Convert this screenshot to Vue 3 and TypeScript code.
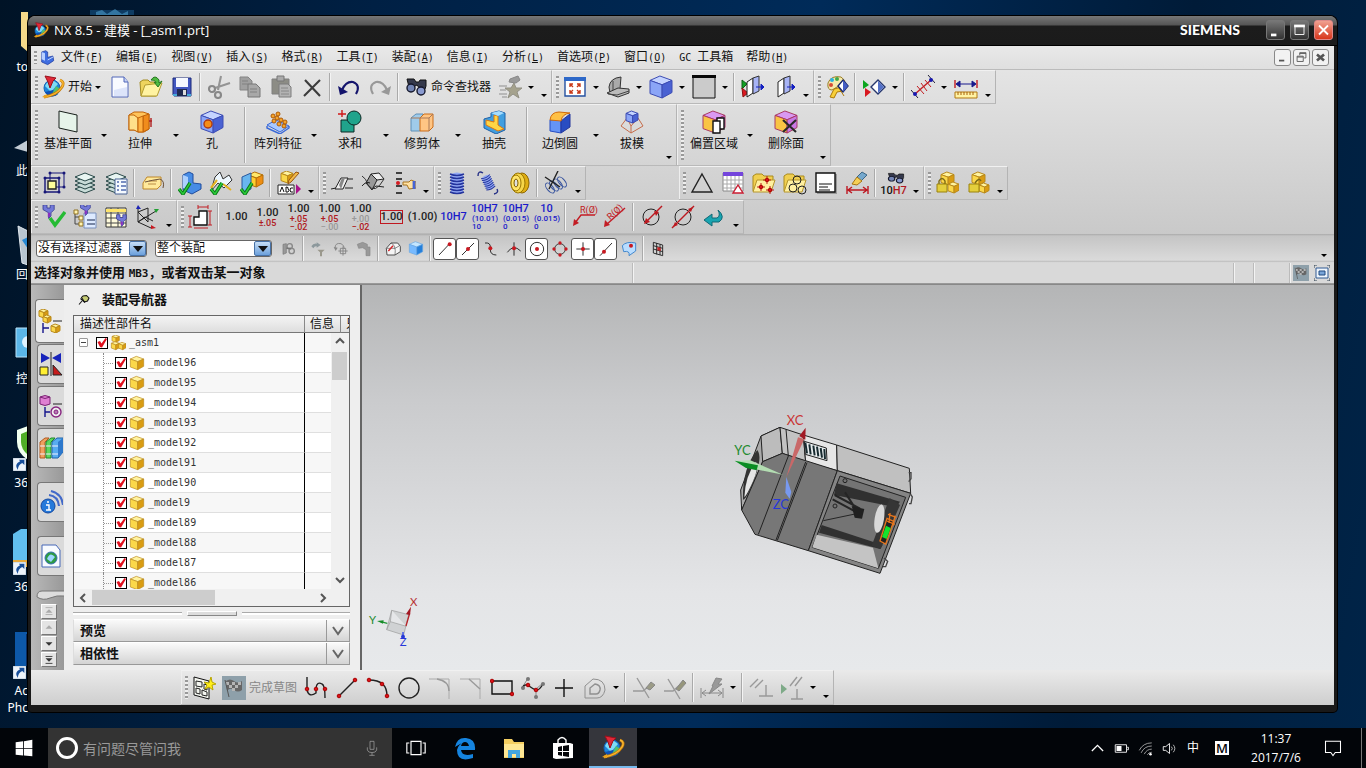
<script setup lang="ts">
import { ref } from 'vue'

type Kind = 'tool' | 'drop' | 'more' | 'sep' | 'dim'
interface Item { kind: Kind; icon: string; label: string; lines: string[][] }
interface Group { items: Item[]; large: boolean; apart: boolean }

// stroke weights above one are drawn a little lighter so small glyphs stay open
const weight = (w: number) => (w > 1 ? w * 0.7 : w)
const p = (d: string, f = 'none', s = 'none', w = 1) =>
  `<path d="${d}" fill="${f}" stroke="${s}" stroke-width="${weight(w)}"/>`
const c = (x: number, y: number, r: number, f = 'none', s = 'none', w = 1) =>
  `<circle cx="${x}" cy="${y}" r="${r}" fill="${f}" stroke="${s}" stroke-width="${weight(w)}"/>`
const cube = (x: number, y: number, s: number, t: string, l: string, r: string, e: string) => {
  const a = y + s * 0.2, b = y + s * 0.4, m = x + s * 0.55
  return p(`M${x} ${a}L${x + s * 0.45} ${y}L${x + s} ${a}L${m} ${b}Z`, t, e) +
    p(`M${x} ${a}L${m} ${b}V${y + s}L${x} ${y + s * 0.8}Z`, l, e) +
    p(`M${m} ${b}L${x + s} ${a}V${y + s * 0.75}L${m} ${y + s}Z`, r, e)
}
const gold = (x: number, y: number, s: number) => cube(x, y, s, '#fff3a0', '#fbd84a', '#d99c12', '#b98a1c')
const blue = (x: number, y: number, s: number) => cube(x, y, s, '#c5d4ff', '#8ba5f7', '#4a62d2', '#3c4cb4')
const tick = (x: number, y: number) => p(`M${x} ${y + 4}l4 5l7 -11`, 'none', '#0b7a1a', 5) + p(`M${x} ${y + 4}l4 5l7 -11`, 'none', '#2dcc3a', 2)
const folder = p('M1 5l3 -2h6l2 2h9v3l-3 12h-17z', '#f0cf50', '#a98a1c') + p('M5 9h18l-4 12h-18z', '#fff0a0', '#b5952a')
const scope = p('M3 4h7l2 3h3l1 -2h6v6l-1 3h-5l-3 -4l-4 2h-4z', '#35394c', '#111') + c(7, 13, 4, '#7385b5', '#15182c', 2) + c(17, 16, 4, '#8a9bd0', '#15182c', 2)
const logo = c(11, 13, 8, '#1c86dc', '#1464b4') + p('M4 11a8 8 0 0 1 9 -5l4 3l-7 8z', '#7fdcf4') + p('M4 17a8 8 0 0 0 13 2l-5 -4z', '#0d50b4') + p('M11 19l4 -8l3 2q1 5 -4 7z', '#52c070') +
  p('M19 5q5 2 2 7q-5 8 -18 10', 'none', '#c67a08', 4) + p('M19 5q5 2 2 7q-5 8 -18 10', 'none', '#f8b832', 2) + p('M1 22l5 -3v4z', '#e9a21c') + p('M4 1l11 2l-3 3l-3 7l-2 -6z', '#e02838', '#9a101c')
const pipe = p('M10 3l8 -1l5 6l-7 1z', '#eee', '#222') + p('M10 3l-5 9l6 7l5 -10z', '#999', '#222') + p('M1 15q4 -5 8 -3M11 18l4 -3l8 1', 'none', '#222')
const layers = [18, 14, 10].map(y => p(`M2 ${y}l10 -4l10 4l-10 4z`, '#c8dcd8', '#284848')).join('') + p('M2 6l10 -4l10 4l-10 4z', '#e8f5f2', '#284848')
const funnel = p('M5 1h5v4h4v-4h5v6l-4 4v4l-3 3v-7l-7 -4z', '#7379d8', '#34388e') + p('M11 11h3v5h-3z', '#8a30c0')
const spring = p('M6 3q6 -3 12 0v18q-6 3 -12 0z', '#92a8f4') + [3, 6, 9, 12, 15, 18, 21].map(y => p(`M5 ${y}q7 3 14 0`, 'none', '#24349c', 2)).join('')
const section = p('M6 7l6 -4v15l-6 4z', '#fff', '#222') + p('M12 3l6 -2v15l-6 3z', '#a8b4f5', '#333') + p('M15 12h5M20 9l3 3l-3 3z', '#1420c0', '#1420c0')
const grayFlag = `<rect width="24" height="24" fill="#8ea0aa"/>` + p('M4 5q4 -3 8 0t8 0v9q-4 3 -8 0t-7 1z', '#666') + p('M4 6h3v3h-3zM10 6h3v3h-3zM16 6h3v3h-3zM7 9h3v3h-3zM13 9h3v3h-3zM10 12h3v3h-3z', '#b5b5b5') + p('M3 4l4 17', 'none', '#555')
const dot = (x: number, y: number) => c(x, y, 1.8, '#d81018', '#a00')
const padlock = p('M4 13v-3q3 -5 6 0v3', 'none', '#7a6a18', 2) + p('M2 13h10v8h-10z', '#e4cf3c', '#9a820c')

const icons: Record<string, string> = {
  logo,
  part: p('M4 3l6 -2l3 2v8l8 -2l1 7l-9 6l-9 -4z', '#3f6ee0', '#1a3496') + p('M4 3l5 2v11l-5 -2z', '#b8d0ff') + p('M13 15l9 -5', 'none', '#c8dcff', 2),
  new: p('M4 2h12l4 5v15h-16z', '#f8faff', '#5166b8') + p('M16 2v5h4', '#c5d2f5', '#5166b8') + p('M6 15l13 -3v9h-13z', '#dce4fa'),
  open: p('M1 7l3 -2h5l2 2h8v4l-2 10h-15z', '#eed45e', '#a28b22') + p('M6 10l17 -2l-5 13h-16z', '#fff3a2', '#b39c30') + p('M12 5q4 -6 8 0v3l3 -2l-4 6l-4 -5l2 1q0 -3 -5 -3', '#4fbb42', '#277820'),
  save: p('M3 3h18v18h-17l-1 -1z', '#4257c0', '#1a2878') + p('M6 3h12v9h-12z', '#f5f8ff') + p('M7 14h10v7h-10z', '#202a50') + p('M13 15h3v5h-3z', '#ddd') + p('M3 19h4v2h-4zM17 19h4v2h-4z', '#45a9d8'),
  cut: p('M14 1l-3 14M23 8l-15 5', 'none', '#949494', 3) + c(5, 14, 3, 'none', '#888', 3) + c(11, 20, 3, 'none', '#888', 3),
  copy: p('M2 2h8l4 4v9h-12z', '#a0a0a0', '#858585') + p('M10 9h8l4 4v9h-12z', '#a8a8a8', '#777') + p('M4 6h6M4 9h6M12 14h7M12 17h7', 'none', '#808080'),
  paste: p('M3 4h17v15h-17z', '#8c8c85', '#808080') + p('M8 1h7v5h-7z', '#aaa', '#777') + p('M10 9h9l3 3v10h-12z', '#b3b3b3', '#7c7c7c') + p('M12 13h7M12 16h8M12 19h8', 'none', '#888'),
  del: p('M5 5l15 16M20 5l-16 16', 'none', '#3c3c3c', 3),
  undo: p('M5 15q4 -9 11 -8q8 3 3 12', 'none', '#14146c', 3) + p('M1 11l2 9l8 -3z', '#14146c'),
  redo: p('M19 15q-4 -9 -11 -8q-8 3 -3 12', 'none', '#989898', 3) + p('M23 11l-2 9l-8 -3z', '#989898'),
  find: scope,
  star: p('M16 8l2 5h6l-5 4l2 6l-6 -4l-5 4l2 -6l-5 -4h6z', '#a5a28d', '#929084') + p('M12 4l8 -3l2 4l-4 3l-7 -1z', '#999', '#888') + p('M1 11h8M2 15h6M1 19h8M4 22h5', 'none', '#aaa', 2),
  fit: p('M2 3h20v18h-20z', '#fff', '#2450a0', 2) + p('M1 2h22v4h-22z', '#2d68c8') + p('M7 12v-3h3M17 12v-3h-3M7 15v3h3M17 15v3h-3M7 9l3 3M17 9l-3 3M7 18l3 -3M17 18l-3 -3', 'none', '#c83818', 2),
  hide: p('M3 12q1 -9 12 -10l-1 12l-10 4z', '#aaa', '#333') + p('M1 18l11 -5l11 1v4l-11 4z', '#bbb', '#333') + p('M7 6v9M2 19l9 1l12 -4', 'none', '#444'),
  shade: blue(1, 1, 22),
  swatch: p('M1 1h22v22h-22z', '#cbcbcb', '#111') + p('M0 0h24v3h-24z', '#080808'),
  clip1: p('M1 5l5 4l-5 5z', '#12a025', '#126018') + p('M1 13l6 5l-5 4z', '#dc1720', '#811') + section,
  clip2: section,
  role: p('M3 8q3 -8 13 -6q5 3 4 7l-8 3l-5 3q-5 0 -4 -7z', '#f5eaaa', '#9a7d28') + c(7, 5, 2, '#29b1e0') + c(12, 4, 2, '#41a848') + c(6, 10, 2, '#d54c36') + p('M9 14l8 -2l1 4l-6 1l-3 6l-4 -1zM14 13l5 8', '#f7d03b', '#ad7a08') + p('M18 5l5 6l-5 6l-5 -6z', '#fff', '#15256a', 2) + p('M18 5l5 6l-5 6z', '#445dc3'),
  flag: p('M1 5l6 5l-6 4z', '#0da51f') + p('M3 13l6 4l-6 5z', '#d81820') + p('M16 5l7 7l-7 7l-7 -7z', '#fff', '#26366d', 2) + p('M16 6l6 6l-6 6z', '#5270c8'),
  measure: p('M4 19l16 -14', 'none', '#c21d22', 2) + p('M6 11l7 8M10 8l6 8M14 5l6 7', 'none', '#c21d22') + p('M0 15l7 8M17 0l7 8', 'none', '#24233a') + c(4, 19, 2, '#1818b0') + c(20, 5, 2, '#1818b0'),
  ruler: p('M1 5v8M23 5v8', 'none', '#c11d24', 2) + p('M3 9h18M6 6l-4 3l4 3zM18 6l4 3l-4 3z', '#19198c', '#19198c') + p('M1 17h22v6h-22z', '#fff3a5', '#b27910') + p('M4 17v3M7 17v3M10 17v3M13 17v3M16 17v3M19 17v3', 'none', '#a65e08'),
  plane: p('M3 1l18 4v17l-18 -4z', '#e6f4ea', '#161e1a'),
  extrude: p('M1 5l5 -3h9l6 2v15l-5 3h-6l-3 -2h-6z', '#ffc45a', '#c06208') + p('M1 5h5l4 3v14l-4 -2h-5z', '#ffe08a', '#c06208') + p('M15 6l6 -2v15l-6 3z', '#f08c1c', '#c06208') + p('M10 8l5 -2v16h-5z', '#ffb040', '#c06208') + p('M23 8v9M21 11h4', 'none', '#b02020', 2),
  hole: blue(1, 1, 22) + c(8, 14, 4, '#f48d18', '#b03a10', 2),
  pattern: p('M1 15l9 -5l13 6l-9 6z', '#a8c8ff', '#3868d8') + p('M1 16v2l13 6l9 -6v-2', 'none', '#3868d8', 2) + [[8, 11], [13, 14], [18, 16], [11, 8], [15, 10], [19, 12], [7, 6], [12, 4]].map(q => c(q[0], q[1], 2, '#f6a328', '#ac5908')).join(''),
  unite: p('M3 10h13v12h-13z', '#20a48c', '#0d2824') + c(16, 8, 7, '#20a48c', '#0d2824') + p('M4 0v7M0 4h8', 'none', '#d01818', 2),
  trim: p('M1 8l5 -4h7v13l-3 4h-9z', '#9fcbea', '#5f90b8') + p('M10 8l4 -4h9v13l-4 4h-9z', '#ffc584', '#ca6c18') + p('M1 8h18v13M19 8l4 -4', 'none', '#a87858'),
  shell: p('M2 9l7 -2v-4l8 -2l6 2v17l-9 4l-12 -6z', '#419fe0', '#2162a8') + p('M4 10l8 2v-7l4 1v9l6 4l-6 2l-12 -6z', '#ffd645', '#dd7710') + p('M9 3l8 -2l5 2l-6 3z', '#a5ddff'),
  blend: p('M2 10v11l11 2v-13z', '#6594f5', '#254dc3') + p('M13 11l9 -7v13l-9 6z', '#294dc2', '#25379b') + p('M2 10q1 -8 9 -8l11 1q-8 1 -9 8z', '#ffc045', '#d16a0b'),
  draft: p('M1 16l6 -8h11l5 8l-12 7z', 'none', '#c56c4a') + p('M7 8l4 8v7M18 8l-7 8', 'none', '#c56c4a') + blue(6, 1, 12),
  offset: cube(1, 1, 22, '#d999f2', '#f9c444', '#c878e4', '#a83a64') + p('M11 11h4v-3h7v11h-4v4h-7zM15 11h3v8', '#fff', '#111', 2),
  delface: cube(1, 1, 22, '#d999f2', '#f9c444', '#c878e4', '#a83a64') + p('M9 10l13 12M22 10l-13 12', 'none', '#292929', 3),
  wcs: p('M3 7h14v14h-14z', 'none', '#171778', 2) + p('M8 2h14v14h-14z', 'none', '#171778') + p('M6 10h8v8h-8z', '#ffff9a', '#222', 2) + [[3, 7], [17, 7], [3, 21], [17, 21], [8, 2], [22, 2], [22, 16]].map(q => c(q[0], q[1], 1.5, '#171778')).join(''),
  layers,
  layerlist: layers + p('M11 8h12v15h-12z', '#f5faff', '#496294') + p('M13 11h2M13 15h2M13 19h2M17 11h5M17 15h5M17 19h5', 'none', '#506bb0', 2),
  tag: p('M2 12l4 -6h14v8l-4 4h-14z', '#ffe99b', '#bd862b') + p('M8 10h8M7 13h8', 'none', '#ba8b45') + p('M4 11q8 -2 15 -3q5 2 3 9', 'none', '#6a503a'),
  okpart: p('M5 4l6 -3l4 2v9l8 1v5l-9 5l-9 -4z', '#478ce5', '#214d9d') + p('M5 4l5 2v13l-5 -2z', '#acd1ff') + tick(1, 14),
  okdraw: p('M6 6l5 -5l3 7l6 -4l3 5l-8 8l-6 -5l-7 8z', '#eef8ff', '#333') + p('M2 17l6 -8M14 13l8 6', 'none', '#e5b222', 3) + tick(2, 14),
  okbox: cube(8, 1, 15, '#ffe86b', '#ffce2f', '#ee8d12', '#b56f08') + p('M2 6l9 -4v16l-9 4z', '#69b6ee', '#2859a0') + tick(1, 14),
  abc: gold(4, 0, 12) + p('M22 2l-8 9l-3 2l1 -4l7 -8z', '#f2bb4a', '#995412') + p('M1 14h16v9h-16z', '#fff', '#222') + p('M3 21l2 -5l2 5M9 16v5h2q2 -2 0 -3q1 -2 -2 -2M16 17q-3 -1 -3 2t3 2', 'none', '#111') + p('M19 13l5 5l-5 5z', '#aa128b'),
  pipe1: p('M1 18l5 -1M15 17h8M18 8h5', 'none', '#222') + p('M5 18l6 -11h7l-5 11z', '#f2f2f2', '#222') + p('M9 14l3 -7h3l-4 11z', '#888'),
  pipe2: pipe + p('M1 5q4 2 6 9q7 10 16 -6', 'none', '#333'),
  finger: p('M4 2h6M4 8h6M4 15h6M4 22h6', 'none', '#111', 2) + c(6, 12, 2, '#d51c22') + p('M11 11h6l2 -2l5 2v6l-7 1l-2 -4h-4z', '#ffe1a0', '#a9741d') + p('M22 10v8', 'none', '#4663d5', 4),
  coil: spring,
  coil2: `<g transform="rotate(-25 12 12) translate(4 3) scale(0.7)">${spring}</g>` + p('M2 5q0 -6 5 -3M18 23q5 -1 3 -5', 'none', '#253086', 2),
  pulley: `<ellipse cx="15" cy="12" rx="7" ry="10" fill="#dfae14" stroke="#8d6600"/><ellipse cx="11" cy="12" rx="7" ry="10" fill="#f6d649" stroke="#9a7500"/><ellipse cx="9" cy="12" rx="5" ry="8" fill="#ffe468" stroke="#9a7500"/><ellipse cx="9" cy="12" rx="2" ry="4" fill="#e0e0e0" stroke="#805f00"/>`,
  coilx: [0, 4, 8, 12].map(x => `<ellipse cx="${6 + x}" cy="${17 - x * 0.5}" rx="3" ry="6" transform="rotate(-40 ${6 + x} ${17 - x * 0.5})" fill="none" stroke="#38549e"/>`).join('') + p('M1 6l15 10M14 0l-9 18', 'none', '#222', 2),
  tri: p('M12 3l10 18h-20z', 'none', '#222', 2),
  table: p('M2 2h20v18h-20z', '#fff', '#888') + p('M2 1h20v4h-20z', '#7445dc') + p('M2 9h20M2 13h20M2 17h20M6 5v15M10 5v15M14 5v15M18 5v15', 'none', '#aaa') + p('M17 14l5 8h-10z', '#fff', '#ca1d32', 2),
  foldx: folder + p('M15 5v8M11 9h8M9 12v8M5 16h8M18 15v8M14 19h8', 'none', '#be2018') + dot(15, 9) + dot(9, 16) + dot(18, 19),
  foldo: folder + c(14, 9, 4, 'none', '#222') + c(10, 17, 4, 'none', '#222') + c(19, 19, 4, 'none', '#222'),
  note: p('M3 3h20v20h-20z', '#999') + p('M2 2h19v19h-19z', '#fff', '#111', 2) + p('M5 13h13M5 16h9M5 19h11', 'none', '#111'),
  brush: p('M17 1l5 3l-6 6l-4 -4z', '#75a8cd', '#3d6685') + p('M12 6l5 4l-5 4l-5 -1z', '#f6cf55', '#a77412') + p('M2 15v8M23 15v8M3 19h19M7 16l-4 3l4 3M18 16l4 3l-4 3', 'none', '#bd1822', 2),
  fit10: `<g transform="translate(4 0) scale(0.8 0.6)">${scope}</g>`,
  cubes1: gold(6, 1, 13) + gold(13, 11, 11) + padlock,
  cubes2: gold(6, 1, 13) + gold(13, 12, 10) + p('M9 12q4 -6 6 -2', 'none', '#7a6a18', 2) + p('M3 13h10v8h-10z', '#e4cf3c', '#9a820c'),
  fok: `<g transform="translate(-3 -1) scale(0.8)">${funnel}</g>` + p('M8 13l5 7l10 -13', 'none', '#26bb34', 5),
  ftree: p('M2 6v13h7M2 12h7', 'none', '#444') + p('M1 5h4v4h-4zM6 11h4v4h-4zM6 17h4v4h-4z', '#fff3b0', '#917223') + p('M11 8h12v15h-12z', '#ddeaff', '#7890bd') + `<g transform="translate(4 -2) scale(0.7)">${funnel}</g>` + p('M14 15h8M14 19h8', 'none', '#568', 2),
  fgrid: p('M2 3h20v19h-20z', '#fffbdc', '#333') + p('M2 8h20M2 13h20M2 18h20M7 3v19M14 3v19', 'none', '#444') + p('M2 4h20v3h-20z', '#ffe56b') + `<g transform="translate(9 9) scale(0.7)">${funnel}</g>`,
  csys: p('M3 2v15l13 6M3 17l18 -11M3 17l7 -5l8 4M3 7l10 -4v14z', 'none', '#222') + p('M1 4l2 -4l3 4z', '#1d24b5') + p('M19 4l5 0l-3 4z', '#21a033') + p('M16 20l5 3l-5 1z', '#c71820'),
  dimshape: p('M6 20v-8h5v-6h8v14z', '#fff', '#111', 2) + p('M2 11v11M0 11h4M0 22h4M10 2h10M10 0v4M20 0v4M22 6v14M20 6h4M20 20h4M6 23h14', 'none', '#c11e24'),
  radius1: p('M3 18l6 -8h14', 'none', '#c31c24', 2) + p('M1 21l1 -7l5 4z', '#c31c24'),
  radius2: p('M3 20l19 -17', 'none', '#c31c24', 2) + p('M1 22l1 -7l5 5z', '#c31c24'),
  dia1: c(11, 12, 8, 'none', '#222') + p('M5 18l17 -17', 'none', '#bc1920', 2) + p('M4 19l2 -6l4 4zM14 6l5 1l-3 4z', '#bc1920'),
  dia2: c(12, 12, 8, 'none', '#222') + p('M1 23l22 -22', 'none', '#bc1920', 2) + p('M2 22l5 -2l-3 -3zM22 2l-5 2l3 3z', '#bc1920'),
  teal: p('M16 5q8 7 1 12h-7v4l-8 -6l8 -6v4h5q4 -2 1 -8', '#18a4b0', '#126875'),
  grey1: p('M3 5l5 -1v14l-5 2z', '#999', '#777') + c(13, 8, 4, 'none', '#888', 3) + c(16, 15, 4, 'none', '#888', 3) + p('M8 11h7', 'none', '#777', 3),
  grey2: p('M2 8q3 -5 8 -4v-2l6 4l-6 4v-2q-3 -1 -5 3z', '#8c989c') + p('M11 13h11l-4 4v6h-3v-6z', '#9a988c'),
  grey3: p('M3 11q0 -9 9 -7q5 2 5 8M15 8v14M8 15h14M11 11h8v8h-8z', 'none', '#858585', 2) + p('M1 9l3 6l3 -5z', '#888'),
  grey4: p('M2 5l8 -3l7 3v4h4v13h-6v-9l-5 -3l-6 1z', '#999', '#888'),
  eraser: p('M2 11l7 -8h10l4 5v8l-8 5h-12z', '#f5f5f5', '#444', 2) + p('M9 3q8 3 6 18M2 11h13l7 -4', 'none', '#555') + p('M5 15l7 -8', 'none', '#d32328', 3),
  solid: cube(2, 1, 20, '#c4e6ff', '#77baff', '#257fda', '#69a7e3'),
  sn1: p('M3 21l16 -17', 'none', '#222', 2) + c(19, 5, 3, '#c81820'),
  sn2: p('M3 21l18 -18', 'none', '#222', 2) + c(12, 12, 3, '#c81820'),
  sn3: p('M3 3q8 -1 8 6v4q0 8 9 8', 'none', '#222', 2) + c(11, 11, 3, '#c81820'),
  sn4: p('M12 2v20M2 17q9 -13 20 -2', 'none', '#222', 2) + c(12, 11, 3, '#c81820'),
  sn5: c(12, 12, 10, 'none', '#222', 2) + c(12, 12, 3, '#c81820'),
  sn6: c(12, 12, 8, 'none', '#333', 2) + [[12, 3], [21, 12], [12, 21], [3, 12]].map(q => c(q[0], q[1], 2.5, '#c81820')).join(''),
  sn7: p('M12 2v20M2 12h20', 'none', '#222', 2) + c(12, 12, 3, '#c81820'),
  sn8: p('M3 22l18 -19', 'none', '#222', 2) + c(9, 16, 3, '#c81820'),
  sn9: p('M2 7q6 -7 20 -4v12l-10 7q2 -8 -8 -6z', '#b9ddff', '#3c83cb', 2) + c(15, 7, 3, '#c81820'),
  sgrid: p('M5 2l14 4v16l-14 -4zM5 7l14 4M5 12l14 4M10 3v17M15 5v16', 'none', '#222', 2) + p('M11 9l5 1v5l-5 -1z', '#c82628'),
  sketch: p('M2 1l15 4v18l-15 -4z', '#f4f6f0', '#111') + p('M4 5l6 1v5l-6 -1zM12 8l3 1v5l-3 -1zM4 12l4 1v5l-4 -1zM10 14l5 2v4l-5 -1z', 'none', '#222') + p('M19 1l1 5l4 2l-4 1l1 5l-4 -3l-4 2l2 -4l-3 -3l5 1z', '#ffef1c', '#b8a500'),
  finish: grayFlag,
  profile: p('M3 1v13q2 8 9 3v-5q1 -7 6 -4q3 1 3 14', 'none', '#222', 2) + dot(3, 13) + dot(12, 13) + dot(21, 13),
  line: p('M4 20l16 -16', 'none', '#222', 2) + dot(4, 20) + dot(20, 4),
  arc: p('M3 4q18 0 18 16', 'none', '#222', 2) + dot(3, 4) + dot(16, 8) + dot(21, 20),
  circle: c(12, 12, 10, 'none', '#222', 2),
  fillet: p('M1 3h20v20', 'none', '#aaa') + p('M9 3q12 2 12 12', 'none', '#999', 2),
  chamfer: p('M1 3h20v20', 'none', '#aaa') + p('M10 3l11 10', 'none', '#999', 2),
  rect: p('M2 5h20v13h-20z', 'none', '#111', 2) + dot(2, 5) + dot(22, 18),
  spline: p('M1 12l6 -10M15 13l7 -6M15 13v7', 'none', '#888') + p('M1 12q3 -5 7 -2t7 4t7 -6', 'none', '#222', 2) + [[2, 12], [7, 3], [22, 8], [15, 21]].map(q => c(q[0], q[1], 2, '#777')).join('') + dot(7, 9) + dot(15, 14),
  plus: p('M12 3v18M3 12h18', 'none', '#111', 2),
  offcrv: p('M2 22v-12l8 -7q12 0 12 11q-2 8 -8 8z', 'none', '#909090') + p('M7 18v-6l5 -4q6 1 5 6q-1 4 -4 4z', 'none', '#909090', 2),
  trim1: p('M5 2l12 20M1 15h10l6 -5', 'none', '#999', 2) + p('M14 12l5 -6l4 3l-5 5z', '#9b9b86', '#888'),
  trim2: p('M5 3l12 20M1 15h9l10 -9', 'none', '#999', 2) + p('M13 13l7 -9l3 3l-7 8z', '#96967b', '#888'),
  autodim: p('M1 12v10M23 12v10M2 17h20M6 14l-4 3l4 3M18 14l4 3l-4 3', 'none', '#888') + p('M12 10l4 -8l6 1l-4 5h4l-13 10l4 -8z', '#999', '#888'),
  con1: p('M1 11l8 -8M6 12l8 -8M17 9v11M10 20h14', 'none', '#999', 2),
  con2: p('M1 8l6 5l-6 5z', '#7eaa88') + p('M10 10l7 -9M15 10l7 -9M17 13v10M11 23h12', 'none', '#999', 2),
  asm: gold(3, 0, 11) + gold(2, 10, 12) + gold(13, 11, 11),
  box: gold(2, 2, 20),
  navAsm: gold(1, 0, 9) + gold(5, 6, 8) + gold(13, 15, 9) + p('M5 14v10M5 19h6', 'none', '#15158c', 2) + p('M15 12h9', 'none', '#222'),
  constraint: p('M2 1l9 5l-9 5zM22 1l-9 5l9 5z', '#1824bb') + p('M12 0v24', 'none', '#222') + p('M1 15h8v8h-8z', '#ffef32', '#222') + p('M14 13l9 10h-9z', '#c51b1b', '#222'),
  history: p('M1 3v7q5 3 10 0v-7q-5 -3 -10 0q5 3 10 0', '#df7fd2', '#7c2475') + p('M6 13v10M6 18h5', 'none', '#15158c', 2) + p('M14 10h9', 'none', '#222') + c(17, 18, 5, '#eee', '#872480', 2) + c(17, 18, 2, '#b878b4', '#872480'),
  books: p('M1 6l5 -4h4l-4 4v16h-5z', '#f0a060', '#b05a20') + p('M7 6l5 -4h4l-4 4v16h-5z', '#5cd85c', '#23872b') + p('M13 6l5 -4h6v14l-5 6h-6z', '#58acf0', '#1e62a8') + p('M19 6l5 -4v14l-5 6z', '#2d78cc') + p('M1 10h5M7 10h5M13 10h6M1 18h5M7 18h5M13 18h6', 'none', '#eef'),
  info: c(9, 16, 7, '#2579da', '#1548a0') + p('M8 12h2M7 15h3v5M7 20h5', 'none', '#fff', 2) + p('M10 5q9 1 10 11M12 1q11 3 12 14', 'none', '#4269c9', 3),
  html: p('M3 1h14l4 5v17h-18z', '#f8fbff', '#4769b8') + c(12, 14, 6, '#2e9b44', '#356fae') + p('M8 15q3 -8 8 -2l-4 5z', '#9cd6ff'),
  pin: p('M2 21l6 -7', 'none', '#111', 3) + p('M7 7l6 9l6 -2l3 -6l-5 -5l-7 1z', '#c7cd75', '#111', 3) + p('M5 9l9 8', 'none', '#111', 3),
  win: p('M2 5l9 -1v8h-9zM12 4l10 -2v10h-10zM2 13h9v8l-9 -1zM12 13h10v9l-10 -1z', '#fff'),
  tasks: p('M6 4h12v16h-12zM4 6h-3v12h3M20 6h3v12h-3', 'none', '#fff', 2),
  edge: p('M2 11q2 -10 11 -9q10 1 9 12h-14q1 7 12 4v4q-16 5 -16 -8q1 -6 8 -8q-6 2 -10 5M8 10h8q-1 -4 -4 -4t-4 4', '#1584df'),
  files: p('M2 3h8l2 3h10v16h-20z', '#f5cf61') + p('M2 8h20v13h-20z', '#ffe894') + p('M6 22v-8h12v8h-4v-4h-4v4z', '#43a5de'),
  store: p('M2 7h17l3 1v14l-17 1l-3 -1z', '#fff') + p('M7 9v-5q4 -5 8 0v4', 'none', '#fff', 2) + p('M7 11l4 -1v5h-4zM12 10l6 -1v6h-6zM7 16h4v4l-4 -1zM12 16h6v5l-6 -1z', '#05070a'),
  mic: p('M9 2h6v12h-6zM5 11v4q1 4 7 4t7 -4v-4M12 19v4M8 23h8', 'none', '#aaa'),
  up: p('M3 16l9 -9l9 9', 'none', '#fff', 3),
  battery: p('M2 6h18v12h-18zM21 10h2v4h-2', 'none', '#fff', 2) + p('M4 8h8v8h-8z', '#fff'),
  wifi: p('M2 15q6 -12 20 -12M5 19q5 -11 17 -11M10 21q4 -8 12 -8M15 22q2 -4 7 -4', 'none', '#aaa', 2) + c(20, 21, 2, '#fff'),
  sound: p('M2 9h4l6 -5v16l-6 -5h-4z', 'none', '#fff', 2) + p('M15 9q3 3 0 6M18 6q5 6 0 12', 'none', '#ccc', 2),
  bell: p('M2 3h20v15h-7l-3 4l-3 -4h-7z', 'none', '#fff', 2),
  arrowBadge: p('M0 0h24v24h-24z', '#eef4fa', '#8da1b8') + p('M11 3h10v10l-4 -4q-8 4 -8 13q-8 -10 4 -16z', '#184f9a'),
}

const dims: string[][][] = [
  [['1.00', 'k']],
  [['1.00', 'k'], ['±.05', 'r']],
  [['1.00', 'k'], ['+.05', 'r'], ['−.02', 'r']],
  [['1.00', 'k'], ['+.05', 'r'], ['−.00', 'g']],
  [['1.00', 'k'], ['+.00', 'g'], ['−.02', 'r']],
  [['1.00', 'k boxed']],
  [['(1.00)', 'k']],
  [['10H7', 'b']],
  [['10H7', 'b'], ['(10.01)', 'b'], ['10', 'b']],
  [['10H7', 'b'], ['(0.015)', 'b'], ['0', 'b']],
  [['10', 'b'], ['(0.015)', 'b'], ['0', 'b']],
]

// "|" separator, "v" drop-down arrow, "o" overflow arrow, "#n" tolerance style, "icon:label" tool
function group(src: string, large = false, apart = false): Group {
  const items = src.split(' ').map((t): Item => {
    if (t[0] === '#') return { kind: 'dim', icon: '', label: '', lines: dims[Number(t.slice(1))] }
    const kind: Kind = t === '|' ? 'sep' : t === 'v' ? 'drop' : t === 'o' ? 'more' : 'tool'
    const [icon, label = ''] = t.split(':')
    return { kind, icon, label, lines: [] }
  })
  return { items, large, apart }
}

const rows: Group[][] = [
  [
    group('logo:开始 new open save | cut copy paste del | undo redo | find:命令查找器 star v o'),
    group('fit v hide v shade v swatch v | clip1 clip2 o'),
    group('role | flag v | measure v ruler o'),
  ],
  [
    group('plane:基准平面 v extrude:拉伸 v hole:孔 | pattern:阵列特征 v unite:求和 v trim:修剪体 v shell:抽壳 | blend:边倒圆 v draft:拔模 o', true),
    group('offset:偏置区域 v delface:删除面 o', true),
  ],
  [
    group('wcs layers layerlist | tag | okpart okdraw okbox | abc o'),
    group('pipe1 pipe2 finger o'),
    group('coil coil2 pulley | coilx o'),
    group('tri table foldx foldo note brush | fit10 o', false, true),
    group('cubes1 cubes2 o'),
  ],
  [
    group('fok ftree fgrid csys o'),
    group('dimshape | #0 #1 #2 #3 #4 #5 #6 #7 #8 #9 #10 | radius1 radius2 | dia1 dia2 teal o'),
  ],
]
const sketchRow: Group[] = [
  group('sketch finish:完成草图 profile line arc circle fillet chamfer rect spline plus offcrv v | trim1 trim2 | autodim v | con1 con2 v o'),
]

const menus: [string, string][] = [
  ['文件', 'F'], ['编辑', 'E'], ['视图', 'V'], ['插入', 'S'], ['格式', 'R'], ['工具', 'T'], ['装配', 'A'],
  ['信息', 'I'], ['分析', 'L'], ['首选项', 'P'], ['窗口', 'O'], ['GC 工具箱', ''], ['帮助', 'H'],
]
const snaps = ['sn1', 'sn2', 'sn3', 'sn4', 'sn5', 'sn6', 'sn7', 'sn8', 'sn9']
const snapOn = ref(new Set(['sn1', 'sn2', 'sn5', 'sn7', 'sn8']))
function toggle(s: string) {
  if (!snapOn.value.delete(s)) snapOn.value.add(s)
}
const models = ref(['96', '95', '94', '93', '92', '91', '90', '9', '89', '88', '87', '86'].map(n => ({ name: `_model${n}`, on: true })))
const rootOn = ref(true)
const tabs = ['navAsm', 'constraint', 'history', 'books', 'info', 'html']
const shortcuts = [
  { text: 'to', art: 'folder' }, { text: '此', art: 'pc' }, { text: '回', art: 'bin' }, { text: '控', art: 'panel' },
  { text: '36', art: 'shield' }, { text: '36', art: 'drive' }, { text: 'Ac\nPhc', art: 'ps' },
]
const art: Record<string, string> = {
  folder: p('M21 4h7v40l-7 -6z', '#f5d98a'),
  pc: p('M14 36l14 -8v12z', '#c3ccd4'),
  bin: p('M18 10l10 5v34l-6 -2z', '#b9c6d0', '#e1e8ee') + p('M22 24l6 -3v12z', '#2789d3'),
  panel: p('M16 8h12v29h-12z', '#5bb6e8', '#b9e2f8') + c(28, 22, 6, '#dff2ff'),
  shield: p('M17 6l11 -4v34q-11 -7 -11 -18z', '#f1fff0') + p('M21 10l7 -3v24q-7 -6 -7 -13z', '#4fae26'),
  drive: p('M13 6l8 -5h7v33h-15z', '#62bfee') + p('M13 32h15v7h-15z', '#e8aa3c'),
  ps: p('M15 0h13v34h-13z', '#0d58a8') + p('M26 2h2v32h-2z', '#0b2c60'),
}
</script>

<template>
  <div class="screen">
    <div class="desktop">
      <svg class="glow" viewBox="0 0 50 10"><path d="M2 4h44v6h-44z" fill="#1b5f95" opacity="0.5" /><path d="M8 6l6 -2l5 4l8 -5l7 5l6 -3v5h-32z" fill="#4d9ccc" opacity="0.6" /></svg>
      <div class="shortcuts">
        <a v-for="(s, i) in shortcuts" :key="i" href="#" class="shortcut">
          <svg viewBox="0 0 28 50" v-html="art[s.art]" />
          <svg v-if="i > 3" class="badge" viewBox="0 0 24 24" v-html="icons.arrowBadge" />
          <span>{{ s.text }}</span>
        </a>
      </div>

      <main class="window">
        <header class="title">
          <svg class="ic16" viewBox="0 0 24 24" v-html="icons.logo" />
          <span class="caption">NX 8.5 - 建模 - [_asm1.prt]</span>
          <b class="brand">SIEMENS</b>
          <button class="ctl" aria-label="最小化"><svg viewBox="0 0 18 20"><path d="M4 14h6v3h-6z" fill="#fff" /></svg></button>
          <button class="ctl" aria-label="最大化"><svg viewBox="0 0 18 20"><path d="M4 6h10v9h-10z" fill="none" stroke="#fff" /><path d="M3 4h12v3h-12z" fill="#fff" /></svg></button>
          <button class="ctl close" aria-label="关闭"><svg viewBox="0 0 18 20"><path d="M4 5l10 10M14 5l-10 10" stroke="#fff" stroke-width="2" /></svg></button>
        </header>

        <nav class="menu">
          <i class="grip" />
          <svg class="ic16" viewBox="0 0 24 24" v-html="icons.part" />
          <button v-for="m in menus" :key="m[0]" class="menuitem">
            <template v-if="m[1]">{{ m[0] }}<span class="half">(<u>{{ m[1] }}</u>)</span></template>
            <template v-else><span class="half">GC </span>工具箱</template>
          </button>
          <span class="grow" />
          <button class="mdi" aria-label="最小化"><svg viewBox="0 0 16 17"><path d="M4 11h6v2h-6z" fill="#555" /></svg></button>
          <button class="mdi" aria-label="还原"><svg viewBox="0 0 16 17"><path d="M6 6v-3h7v6h-2M3 7h7v6h-7zM3 8h7M6 4h7" fill="none" stroke="#555" stroke-width="1" /></svg></button>
          <button class="mdi" aria-label="关闭"><svg viewBox="0 0 16 17"><path d="M4 5l8 7M12 5l-8 7" stroke="#555" stroke-width="3" /></svg></button>
        </nav>

        <div class="bars">
          <div v-for="(row, ri) in rows" :key="ri" class="row">
            <div v-for="(g, gi) in row" :key="gi" class="group" :class="{ large: g.large, apart: g.apart }">
              <i class="grip" />
              <template v-for="(t, ti) in g.items" :key="ti">
                <i v-if="t.kind === 'sep'" class="sep" />
                <button v-else-if="t.kind === 'drop' || t.kind === 'more'" :class="t.kind" aria-label="更多"><i class="arrow" /></button>
                <button v-else-if="t.kind === 'dim'" class="dim"><span v-for="(l, li) in t.lines" :key="li" :class="l[1]">{{ l[0] }}</span></button>
                <button v-else class="tool" :class="{ wide: t.label && !g.large }">
                  <svg viewBox="0 0 24 24" v-html="icons[t.icon]" />
                  <span v-if="t.label">{{ t.label }}</span>
                  <i v-if="t.icon === 'logo'" class="arrow" />
                  <span v-if="t.icon === 'fit10'" class="ten">10<em>H7</em></span>
                  <span v-if="t.icon.startsWith('radius')" class="rad" :class="t.icon">R(Ø)</span>
                </button>
              </template>
            </div>
          </div>
        </div>

        <div class="selection">
          <label class="pick"><select aria-label="选择过滤器"><option>没有选择过滤器</option></select><span class="knob"><i /></span></label>
          <label class="pick second"><select aria-label="选择范围"><option>整个装配</option></select><span class="knob"><i /></span></label>
          <button class="small"><svg viewBox="0 0 24 24" v-html="icons.grey1" /></button>
          <i class="sep" />
          <button v-for="s in ['grey2', 'grey3', 'grey4']" :key="s" class="small"><svg viewBox="0 0 24 24" v-html="icons[s]" /></button>
          <i class="sep" />
          <button v-for="s in ['eraser', 'solid']" :key="s" class="small"><svg viewBox="0 0 24 24" v-html="icons[s]" /></button>
          <i class="sep" />
          <button v-for="s in snaps" :key="s" class="small" :class="{ on: snapOn.has(s) }" @click="toggle(s)"><svg viewBox="0 0 24 24" v-html="icons[s]" /></button>
          <i class="sep" />
          <button class="small"><svg viewBox="0 0 24 24" v-html="icons.sgrid" /></button>
          <span class="grow" />
          <button class="more" aria-label="更多"><i class="arrow" /></button>
        </div>

        <div class="status">
          <b class="hint">选择对象并使用 <span class="half">MB3</span>，或者双击某一对象</b>
          <span class="cell grow" /><span class="cell c20" /><span class="cell c36" />
          <span class="cell last">
            <svg class="ic16" viewBox="0 0 24 24" v-html="icons.finish" />
            <svg class="ic16" viewBox="0 0 16 16"><path d="M2 3h12v10h-12z" fill="#eef5fc" stroke="#315a93" /><path d="M5 6h6v4h-6z" fill="#79a5d8" stroke="#234b80" /><path d="M0 3v-3h3M13 0h3v3M16 13v3h-3M3 16h-3v-3" fill="none" stroke="#345" /></svg>
          </span>
        </div>

        <section class="work">
          <div class="resource">
            <button v-for="(t, i) in tabs" :key="t" class="tab" :class="{ active: i === 0, spaced: i > 3 }"><svg viewBox="0 0 24 24" v-html="icons[t]" /></button>
            <svg class="wave" viewBox="0 0 28 11"><path d="M28 1h-22q-5 0 -5 6q6 4 13 1t14 -2" fill="#ddd" stroke="#777" /></svg>
            <button v-for="n in 4" :key="n" class="step" aria-label="滚动">
              <svg viewBox="0 0 16 15"><path v-if="n < 3" d="M4 9l4 -4l4 4z" fill="#aaa" /><path v-else d="M4 6l4 4l4 -4z" fill="#333" /><path v-if="n === 1" d="M4 3h8M4 11h8" stroke="#aaa" /><path v-if="n === 4" d="M4 4h8M4 12h8" stroke="#333" /></svg>
            </button>
          </div>

          <aside class="panel">
            <h2><svg viewBox="0 0 24 24" v-html="icons.pin" />装配导航器</h2>
            <div class="tree">
              <div class="viewport">
                <table>
                  <thead><tr><th class="name">描述性部件名</th><th class="inf">信息</th><th class="ro">只</th></tr></thead>
                  <tbody>
                    <tr>
                      <td><div class="node"><span class="expander" /><label><input v-model="rootOn" type="checkbox"><svg class="ic16" viewBox="0 0 24 24" v-html="icons.asm" /><span>_asm1</span></label></div></td><td /><td />
                    </tr>
                    <tr v-for="m in models" :key="m.name">
                      <td><div class="node"><span class="branch" /><label><input v-model="m.on" type="checkbox"><svg class="ic16" viewBox="0 0 24 24" v-html="icons.box" /><span>{{ m.name }}</span></label></div></td><td /><td />
                    </tr>
                  </tbody>
                </table>
                <div class="vscroll"><svg viewBox="0 0 17 17"><path d="M5 10l4 -4l4 4" /></svg><span class="thumb" /><span class="grow" /><svg viewBox="0 0 17 17"><path d="M5 6l4 4l4 -4" /></svg></div>
              </div>
              <div class="hscroll"><svg viewBox="0 0 17 17"><path d="M11 5l-4 4l4 4" /></svg><span class="thumb" /><span class="grow" /><svg viewBox="0 0 17 17"><path d="M7 5l4 4l-4 4" /></svg></div>
            </div>
            <div class="split"><span /></div>
            <button v-for="t in ['预览', '相依性']" :key="t" class="fold"><b>{{ t }}</b><span><svg viewBox="0 0 12 10"><path d="M1 1l5 7l5 -7" fill="none" stroke="#666" stroke-width="2" /></svg></span></button>
          </aside>

          <div class="view">
            <svg class="model" viewBox="0 0 720 570">
              <g stroke="#222" stroke-width="3" stroke-linejoin="round">
                <path d="M183 108L240 82L247 160L188 185L125 330L122 270Z" fill="#aaa" />
                <path d="M183 108L240 82L247 160L188 185Z" fill="#bcbcbc" />
                <path d="M240 82L310 105L317 186L247 160Z" fill="#c3c3c3" />
                <path d="M310 105L410 135L412 212L317 186Z" fill="#e6e6e6" />
                <path d="M410 135L628 205L632 280L412 212Z" fill="#c0c0c0" />
                <path d="M247 160L412 212L325 452L165 403L125 330L188 185Z" fill="#777" />
                <path d="M258 88L265 168L175 403M317 186L228 420M321 188L232 421" fill="none" />
                <path d="M412 212L632 280L540 520L325 452Z" fill="#858585" />
                <path d="M420 228L617 292L535 505L337 442Z" fill="#747474" />
              </g>
              <path d="M172 150q16 20 -8 85t-35 64q-3 -95 43 -149" fill="#333" />
              <path d="M168 185q9 18 -9 59t-26 48q3 -66 35 -107" fill="#e6e6e6" />
              <path d="M410 250L600 305L588 322L402 285Z" fill="#303030" />
              <path d="M365 375L548 435L540 447L357 398Z" fill="#303030" />
              <path d="M569 294L600 315L542 447L515 437Z" fill="#353535" />
              <path d="M350 404L519 443L535 505L337 442Z" fill="#c4c4c4" />
              <path d="M398 298L465 334M404 285L480 326M435 277l31 48" fill="none" stroke="#252525" stroke-width="6" />
              <path d="M465 342L370 362" fill="none" stroke="#252525" stroke-width="3" />
              <path d="M455 318l38 9l-7 29l-22 -3z" fill="#202020" />
              <ellipse cx="538" cy="356" rx="14" ry="43" transform="rotate(9 538 356)" fill="#d9d9d9" />
              <path d="M561 355l20 9l-24 68l-17 -9z" fill="#222" stroke="#e8751b" stroke-width="4" />
              <path d="M558 377l14 7l-12 33l-14 -6z" fill="#13e22d" />
              <path d="M564 343l25 9M561 363l23 10M570 339l-3 30M585 347l-6 30" stroke="#e8751b" stroke-width="4" />
              <path d="M626 218h7v18l-7 9M632 283l5 8l-4 20h-6M552 474l11 10l-6 16h-8" fill="none" stroke="#444" stroke-width="4" />
              <path d="M313 124l66 20l2 38l-65 -19z" fill="#e9eeef" stroke="#222" stroke-width="3" />
              <path d="M316 128l5 32M328 133l4 30M340 137l4 29M351 140l4 29M362 144l4 29M373 147l2 30" stroke="#182b30" stroke-width="6" />
              <circle cx="435" cy="242" r="6" fill="none" stroke="#222" stroke-width="3" /><circle cx="405" cy="318" r="6" fill="none" stroke="#222" stroke-width="3" />
              <path d="M259 232l35 -120l19 5z" fill="#c96868" /><path d="M317 83l-19 25l18 11z" fill="#a21924" />
              <path d="M249 224l-98 -43l-47 2l48 22z" fill="#b3ddb2" /><path d="M104 182l70 14l-4 15l-32 -7z" fill="#098d22" />
              <path d="M259 231l-3 47l13 18l5 -20z" fill="#7899ef" />
              <g font-family="Lato, sans-serif" font-size="39"><text x="260" y="75" fill="#c93535">XC</text><text x="103" y="164" fill="#238b2f">YC</text><text x="218" y="326" fill="#2637da">ZC</text></g>
            </svg>
            <svg class="triad" viewBox="0 0 156 160">
              <path d="M77 45L128 58L113 119L62 103ZM77 45l-4 34l48 14M73 79l-11 24" fill="#cbcecf" stroke="#888" stroke-width="2" opacity="0.8" />
              <path d="M120 92l11 -38" stroke="#b72328" stroke-width="4" /><path d="M135 34l-15 22l12 4z" fill="#a21924" />
              <path d="M64 84l-20 -5" stroke="#209436" stroke-width="4" /><path d="M33 77l20 -2l-2 10z" fill="#148b26" />
              <path d="M111 110v18" stroke="#3049ec" stroke-width="4" /><circle cx="111" cy="124" r="6" fill="#2639d3" />
              <g font-family="Lato, sans-serif" font-size="34"><text x="132" y="31" fill="#b73333">X</text><text x="9" y="85" fill="#238b2f">Y</text><text x="101" y="152" fill="#2637da">Z</text></g>
            </svg>
          </div>
        </section>

        <div class="row bottom">
          <div v-for="(g, gi) in sketchRow" :key="gi" class="group">
            <i class="grip" />
            <template v-for="(t, ti) in g.items" :key="ti">
              <i v-if="t.kind === 'sep'" class="sep" />
              <button v-else-if="t.kind === 'drop' || t.kind === 'more'" :class="t.kind" aria-label="更多"><i class="arrow" /></button>
              <button v-else class="tool" :class="{ wide: t.label, faded: t.label }">
                <svg viewBox="0 0 24 24" v-html="icons[t.icon]" />
                <span v-if="t.label">{{ t.label }}</span>
              </button>
            </template>
          </div>
        </div>
      </main>
    </div>

    <footer class="taskbar">
      <button class="task" aria-label="开始"><svg viewBox="0 0 24 24" v-html="icons.win" /></button>
      <label class="search"><i class="ring" /><input type="text" placeholder="有问题尽管问我"><svg class="ic16" viewBox="0 0 24 24" v-html="icons.mic" /></label>
      <div class="apps">
        <button v-for="t in ['tasks', 'edge', 'files', 'store', 'logo']" :key="t" class="task" :class="{ current: t === 'logo', big: t !== 'tasks' }"><svg viewBox="0 0 24 24" v-html="icons[t]" /></button>
      </div>
      <span class="grow" />
      <button v-for="t in ['up', 'battery', 'wifi', 'sound']" :key="t" class="tray"><svg viewBox="0 0 24 24" v-html="icons[t]" /></button>
      <button class="tray">中</button>
      <button class="tray ime"><b>M</b></button>
      <time class="clock"><span>11:37</span><span>2017/7/6</span></time>
      <button class="bell" aria-label="通知"><svg viewBox="0 0 24 24" v-html="icons.bell" /></button>
      <i class="peek" />
    </footer>
  </div>
</template>

<style>
body { margin: 0; }
</style>

<style scoped>
* { box-sizing: border-box; }
.screen { display: flex; flex-direction: column; height: 100vh; overflow: hidden; font: 12px/16px "Liberation Sans", "Noto Sans CJK SC", sans-serif; color: #111; }
button { border: 0; padding: 0; margin: 0; background: none; font: inherit; color: inherit; flex: none; }
svg { display: block; flex: none; }
.grow { flex: 1; }
.ic16 { width: 16px; height: 16px; }
.desktop { flex: 1; min-height: 0; position: relative; background: linear-gradient(100deg, #001326 0%, #002044 25%, #002b59 55%, #001b38 80%, #002448 100%); }
.glow { position: absolute; left: 88px; top: 6px; width: 50px; height: 10px; }
.shortcuts { position: absolute; left: 0; top: 8px; width: 28px; overflow: hidden; }
.shortcut { display: block; position: relative; height: 104px; color: #fff; text-decoration: none; text-align: right; white-space: pre; font: 12px/17px "Noto Sans", "Noto Sans CJK SC", sans-serif; }
.shortcut svg { width: 28px; height: 50px; }
.shortcut .badge { position: absolute; left: 13px; top: 34px; width: 13px; height: 13px; }
.window { position: absolute; inset: 16px 29px 16px 28px; display: flex; flex-direction: column; border: 3px solid #191919; border-width: 0 3px 7px; border-radius: 7px 7px 4px 4px; background: #ddd; box-shadow: 0 0 0 1px #000; }
.title { height: 30px; margin: 0 -3px; padding: 0 4px 2px 5px; display: flex; align-items: center; gap: 5px; color: #fff; background: linear-gradient(#777 0, #555 9px, #1c1c1c 10px, #1b1b1b 29px, #000 29px); border-radius: 7px 7px 0 0; font-family: "Open Sans", "Noto Sans CJK SC", sans-serif; }
.caption { flex: 1; font-size: 13px; }
.brand { font: 900 14px/16px Lato, sans-serif; margin-right: 21px; }
.ctl { width: 19px; height: 20px; border: 1px solid #777; border-radius: 3px; background: linear-gradient(#777, #333); }
.ctl svg { width: 17px; height: 18px; }
.ctl.close { background: linear-gradient(#f0a090, #d8371c); border-color: #d88; }
.menu { height: 24px; display: flex; align-items: center; background: linear-gradient(#e9e9e9, #dfdfdf); border-bottom: 1px solid #bbb; padding-right: 5px; }
.menu > .ic16 { margin: 0 6px 0 1px; }
.menuitem { margin-right: 13px; }
.half { font: 10px/16px "DejaVu Sans Mono", monospace; white-space: pre; }
.mdi { width: 17px; height: 17px; margin-left: 2px; border: 1px solid #888; border-radius: 3px; background: #f2f2f2; }
.mdi svg { width: 15px; height: 15px; }
.grip { flex: none; width: 3px; margin: 5px 1px 5px 3px; align-self: stretch; background: repeating-linear-gradient(#999 0 2px, #eee 2px 4px); }
.bars { background: linear-gradient(#e4e4e4, #c9c9c9); }
.row { display: flex; height: 34px; }
.row:has(.large) { height: 62px; }
.group { display: flex; border: 1px solid; border-color: #f1f1f1 #b4b4b4 #b9b9b9 #f1f1f1; border-left-width: 0; box-shadow: inset 1px 0 #eee; }
.group > .grip { margin-left: 4px; margin-right: 0; }
.apart { margin-left: 93px; }
.sep { flex: none; width: 2px; margin: 2px; align-self: stretch; border-left: 1px solid #aaa; border-right: 1px solid #f4f4f4; }
.tool { width: 31px; display: flex; align-items: center; justify-content: center; position: relative; }
.tool svg { width: 24px; height: 24px; }
.tool.wide { width: auto; padding: 0 3px; gap: 3px; }
.large .tool { width: 60px; flex-direction: column; justify-content: flex-start; padding-top: 5px; }
.large .tool span { line-height: 20px; }
.drop { width: 12px; display: flex; align-items: center; justify-content: center; }
.more { width: 14px; display: flex; align-items: flex-end; justify-content: center; padding-bottom: 6px; }
.arrow { width: 0; height: 0; border: 3px solid transparent; border-top-color: #000; border-bottom-width: 0; }
.dim { width: 31px; display: flex; flex-direction: column; align-items: center; justify-content: center; font: 500 11px/12px Roboto, sans-serif; color: #222; }
.dim span + span { font-size: 9px; line-height: 8px; }
.dim .r { color: #b01820; }
.dim .g { color: #999; }
.dim .b { color: #1a1aca; }
.dim .b + .b { font-size: 8px; align-self: flex-start; margin-left: 3px; }
.dim .boxed { border: 1px solid #c01820; line-height: 12px; }
.ten { position: absolute; bottom: 2px; font: 500 11px/12px Roboto, sans-serif; }
.ten em { font-style: normal; color: #b01820; }
.rad { position: absolute; top: 4px; right: 1px; font: 9px/10px Roboto, sans-serif; color: #c01820; }
.rad.radius2 { top: 6px; right: 6px; transform: rotate(-42deg); }
.selection { height: 29px; display: flex; align-items: center; padding: 0 3px 0 5px; background: linear-gradient(#aaa 0, #c5c5c5 2px, #dadada 26px, #bbb 28px, #f2f2f2 29px); }
.selection .more { align-self: stretch; }
.pick { position: relative; width: 111px; height: 17px; margin-right: 8px; flex: none; }
.pick.second { width: 117px; margin-right: 5px; }
.pick select { appearance: none; width: 100%; height: 17px; border: 1px solid #666; border-radius: 3px; background: #fff; padding: 0 0 0 1px; font: inherit; line-height: 15px; color: #111; }
.knob { position: absolute; right: 1px; top: 1px; width: 17px; height: 15px; pointer-events: none; background: linear-gradient(#c7def6, #6ba0dc); border: 1px solid #4771a6; border-radius: 2px; display: grid; place-items: center; }
.knob i { border: 5px solid transparent; border-top: 6px solid #111; border-bottom: 0; }
.small { width: 23px; height: 22px; display: grid; place-items: center; border: 1px solid transparent; border-radius: 3px; }
.small svg { width: 16px; height: 16px; }
.small.on { background: #fff; border-color: #555; }
.status { height: 21px; display: flex; background: #d9d9d9; border-bottom: 1px solid #999; }
.hint { width: 602px; padding: 1px 3px; font-size: 13px; line-height: 17px; }
.hint .half { font-size: 11px; font-weight: 700; }
.cell { border-left: 1px solid #f3f3f3; box-shadow: -1px 0 #bbb; }
.c20 { flex: 0 0 20px; }
.c36 { flex: 0 0 36px; }
.last { display: flex; align-items: center; gap: 5px; padding: 0 4px 0 2px; }
.work { flex: 1; min-height: 0; display: flex; border-top: 1px solid #888; }
.resource { width: 33px; padding: 14px 0 0 6px; background: linear-gradient(90deg, #b9b9b9, #999); display: flex; flex-direction: column; flex: none; overflow: hidden; }
.tab { height: 40px; margin-bottom: 2px; border: 1px solid #777; border-right: 0; border-radius: 4px 0 0 4px; background: #dadada; display: grid; place-items: center; }
.tab svg { width: 24px; height: 24px; }
.tab.active { height: 44px; margin-left: -2px; margin-bottom: 1px; background: #ececec; }
.tab.spaced { margin: 12px 0 2px; }
.wave { width: 28px; height: 11px; margin: 12px 0 3px -1px; }
.step { width: 16px; height: 15px; margin: 0 0 1px 4px; background: #e4e4e4; border: 1px solid; border-color: #fff #777 #777 #fff; }
.step svg { width: 14px; height: 13px; }
.panel { flex: 0 0 298px; padding: 0 10px 5px 9px; border-right: 2px solid #666; background: #eee; display: flex; flex-direction: column; }
h2 { margin: 0; height: 30px; display: flex; align-items: center; gap: 12px; padding-left: 5px; font-size: 13px; }
h2 svg { width: 12px; height: 12px; }
.tree { flex: 1; min-height: 0; border: 1px solid #666; display: flex; flex-direction: column; background: #f0f0f0; }
.viewport { position: relative; flex: 1; min-height: 0; overflow: hidden; background: #fff; }
table { width: 100%; table-layout: fixed; border-collapse: separate; border-spacing: 0; }
th { height: 17px; padding: 0 0 0 5px; font-weight: 400; text-align: left; line-height: 15px; background: linear-gradient(#f4f4f4, #dedede); border-right: 1px solid #888; border-bottom: 1px solid #777; overflow: hidden; white-space: nowrap; }
.name { width: 231px; padding-left: 6px; }
.inf { width: 36px; }
.ro { padding-left: 5px; border-right: 0; }
td { height: 20px; padding: 0; border-bottom: 1px solid #dfdfdf; }
td:first-child { border-right: 1px solid #000; }
tbody tr:nth-child(odd) { background: #f7f7f7; }
.node { display: flex; align-items: center; height: 19px; font: 10px/16px "DejaVu Sans Mono", monospace; color: #333; }
.node label { display: flex; align-items: center; }
.node .ic16 { margin: 0 3px 0 2px; }
.node input { appearance: none; width: 12px; height: 12px; margin: 0; border: 1px solid #000; background: #fff; display: grid; flex: none; }
.node input:checked::before { content: ""; background: #e0101e; clip-path: polygon(5% 45%, 30% 35%, 45% 60%, 85% 5%, 100% 15%, 50% 100%, 30% 95%); }
.expander { width: 9px; height: 9px; margin: 0 8px 0 5px; border: 1px solid #999; border-radius: 1px; background: linear-gradient(#444, #444) center / 5px 1px no-repeat #fff; }
.branch { width: 12px; height: 20px; margin-left: 29px; border-left: 1px dotted #888; background: repeating-linear-gradient(90deg, #999 0 1px, transparent 1px 2px) 0 10px / 9px 1px no-repeat; }
.vscroll { position: absolute; right: 0; top: 17px; bottom: 0; width: 18px; background: #f0f0f0; display: flex; flex-direction: column; }
.vscroll svg, .hscroll svg { width: 17px; height: 17px; fill: none; stroke: #555; stroke-width: 2; flex: none; }
.vscroll .thumb { height: 28px; width: 15px; margin: 2px 0 0 1px; background: #cdcdcd; }
.hscroll { display: flex; height: 17px; padding-right: 18px; }
.hscroll .thumb { width: 123px; height: 15px; margin: 1px; background: #cdcdcd; }
.split { height: 12px; display: flex; align-items: center; gap: 5px; }
.split::before, .split::after { content: ""; flex: 1; height: 2px; border-top: 1px solid #aaa; background: #fff; }
.split span { width: 50px; height: 5px; background: #ddd; border: 1px solid; border-color: #fff #888 #888 #fff; }
.fold { height: 23px; display: flex; align-items: center; background: linear-gradient(#fafafa, #d4d4d4); border: 1px solid; border-color: #fff #999 #999 #ddd; font-size: 13px; }
.fold b { flex: 1; text-align: left; padding-left: 6px; }
.fold span { align-self: stretch; width: 23px; border-left: 1px solid #999; display: grid; place-items: center; }
.fold svg { width: 12px; height: 10px; }
.view { flex: 1; position: relative; overflow: hidden; background: linear-gradient(#b4b5b6 0, #cacbcd 30%, #e4e5e7 80%, #e7e9eb 100%); }
.model { position: absolute; left: 338px; top: 115px; width: 240px; height: 190px; }
.triad { position: absolute; left: 4px; top: 310px; width: 52px; height: 54px; }
.bottom { height: 35px; padding-left: 150px; background: linear-gradient(#eaeaea, #cecece); }
.faded { color: #888; }
.taskbar { height: 40px; flex: none; display: flex; background: #020509; color: #fff; font-family: "Open Sans", "Noto Sans CJK SC", sans-serif; }
.task { width: 48px; display: grid; place-items: center; }
.task svg { width: 20px; height: 20px; }
.task.big svg { width: 24px; height: 24px; }
.apps { display: flex; gap: 1px; }
.task.current { background: #35363c; border-bottom: 2px solid #76b9ed; margin-left: 1px; }
.search { flex: 0 1 344px; background: #333; display: flex; align-items: center; gap: 5px; padding: 0 12px 0 8px; }
.ring { width: 22px; height: 22px; border: 3px solid #fff; border-radius: 50%; flex: none; }
.search input { flex: 1; min-width: 0; border: 0; background: none; color: #fff; font: 14px/20px "Noto Sans CJK SC", sans-serif; padding: 0; outline: 0; }
.search input::placeholder { color: #999; opacity: 1; }
.tray { width: 24px; display: grid; place-items: center; }
.tray svg { width: 15px; height: 15px; }
.tray.ime { width: 34px; }
.ime b { width: 14px; height: 14px; background: #fff; color: #05070a; font: 600 13px/14px "Open Sans", sans-serif; }
.clock { width: 74px; display: flex; flex-direction: column; text-align: center; padding-top: 1px; line-height: 19px; }
.bell { width: 40px; display: grid; place-items: center; }
.bell svg { width: 18px; height: 18px; }
.peek { width: 5px; margin-left: 8px; border-left: 1px solid #777; }
</style>
